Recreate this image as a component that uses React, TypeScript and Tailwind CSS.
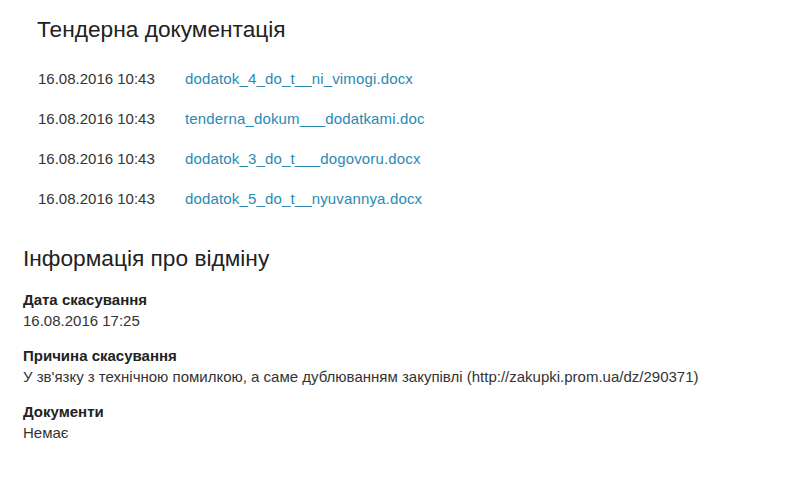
const docs = [
    { date: '16.08.2016 10:43', name: 'dodatok_4_do_t__ni_vimogi.docx' },
    { date: '16.08.2016 10:43', name: 'tenderna_dokum___dodatkami.doc' },
    { date: '16.08.2016 10:43', name: 'dodatok_3_do_t___dogovoru.docx' },
    { date: '16.08.2016 10:43', name: 'dodatok_5_do_t__nyuvannya.docx' },
]

const cancelInfo = [
    { label: 'Дата скасування', value: '16.08.2016 17:25' },
    {
        label: 'Причина скасування',
        value: "У зв'язку з технічною помилкою, а саме дублюванням закупівлі (http://zakupki.prom.ua/dz/290371)",
    },
    { label: 'Документи', value: 'Немає' },
]

export default function App() {
    return (
        <div className="min-h-screen bg-white text-[#333] pl-[23px] pt-[14px] font-['Liberation_Sans',Arial,sans-serif]">
            <section className="pl-[14px]">
                <h2 className="text-[22.7px] leading-[30px] text-[#222]">Тендерна документація</h2>
                <div className="mt-[25px] flex flex-col gap-[20px]">
                    {docs.map((d, i) => (
                        <div key={i} className="flex text-[15px] leading-[20px]">
                            <span className="w-[148px] pl-px">{d.date}</span>
                            <a href="#" className="text-[#2a8ab5] hover:underline tracking-[0.15px]">{d.name}</a>
                        </div>
                    ))}
                </div>
            </section>

            <section className="mt-[34px]">
                <h2 className="text-[22.7px] leading-[30px] text-[#222]">Інформація про відміну</h2>
                <dl className="mt-[17px] flex flex-col gap-[14px] text-[15px]">
                    {cancelInfo.map((item) => (
                        <div key={item.label}>
                            <dt className="font-bold leading-[20px] text-[#222]">{item.label}</dt>
                            <dd className="leading-[22px]">{item.value}</dd>
                        </div>
                    ))}
                </dl>
            </section>
        </div>
    )
}
